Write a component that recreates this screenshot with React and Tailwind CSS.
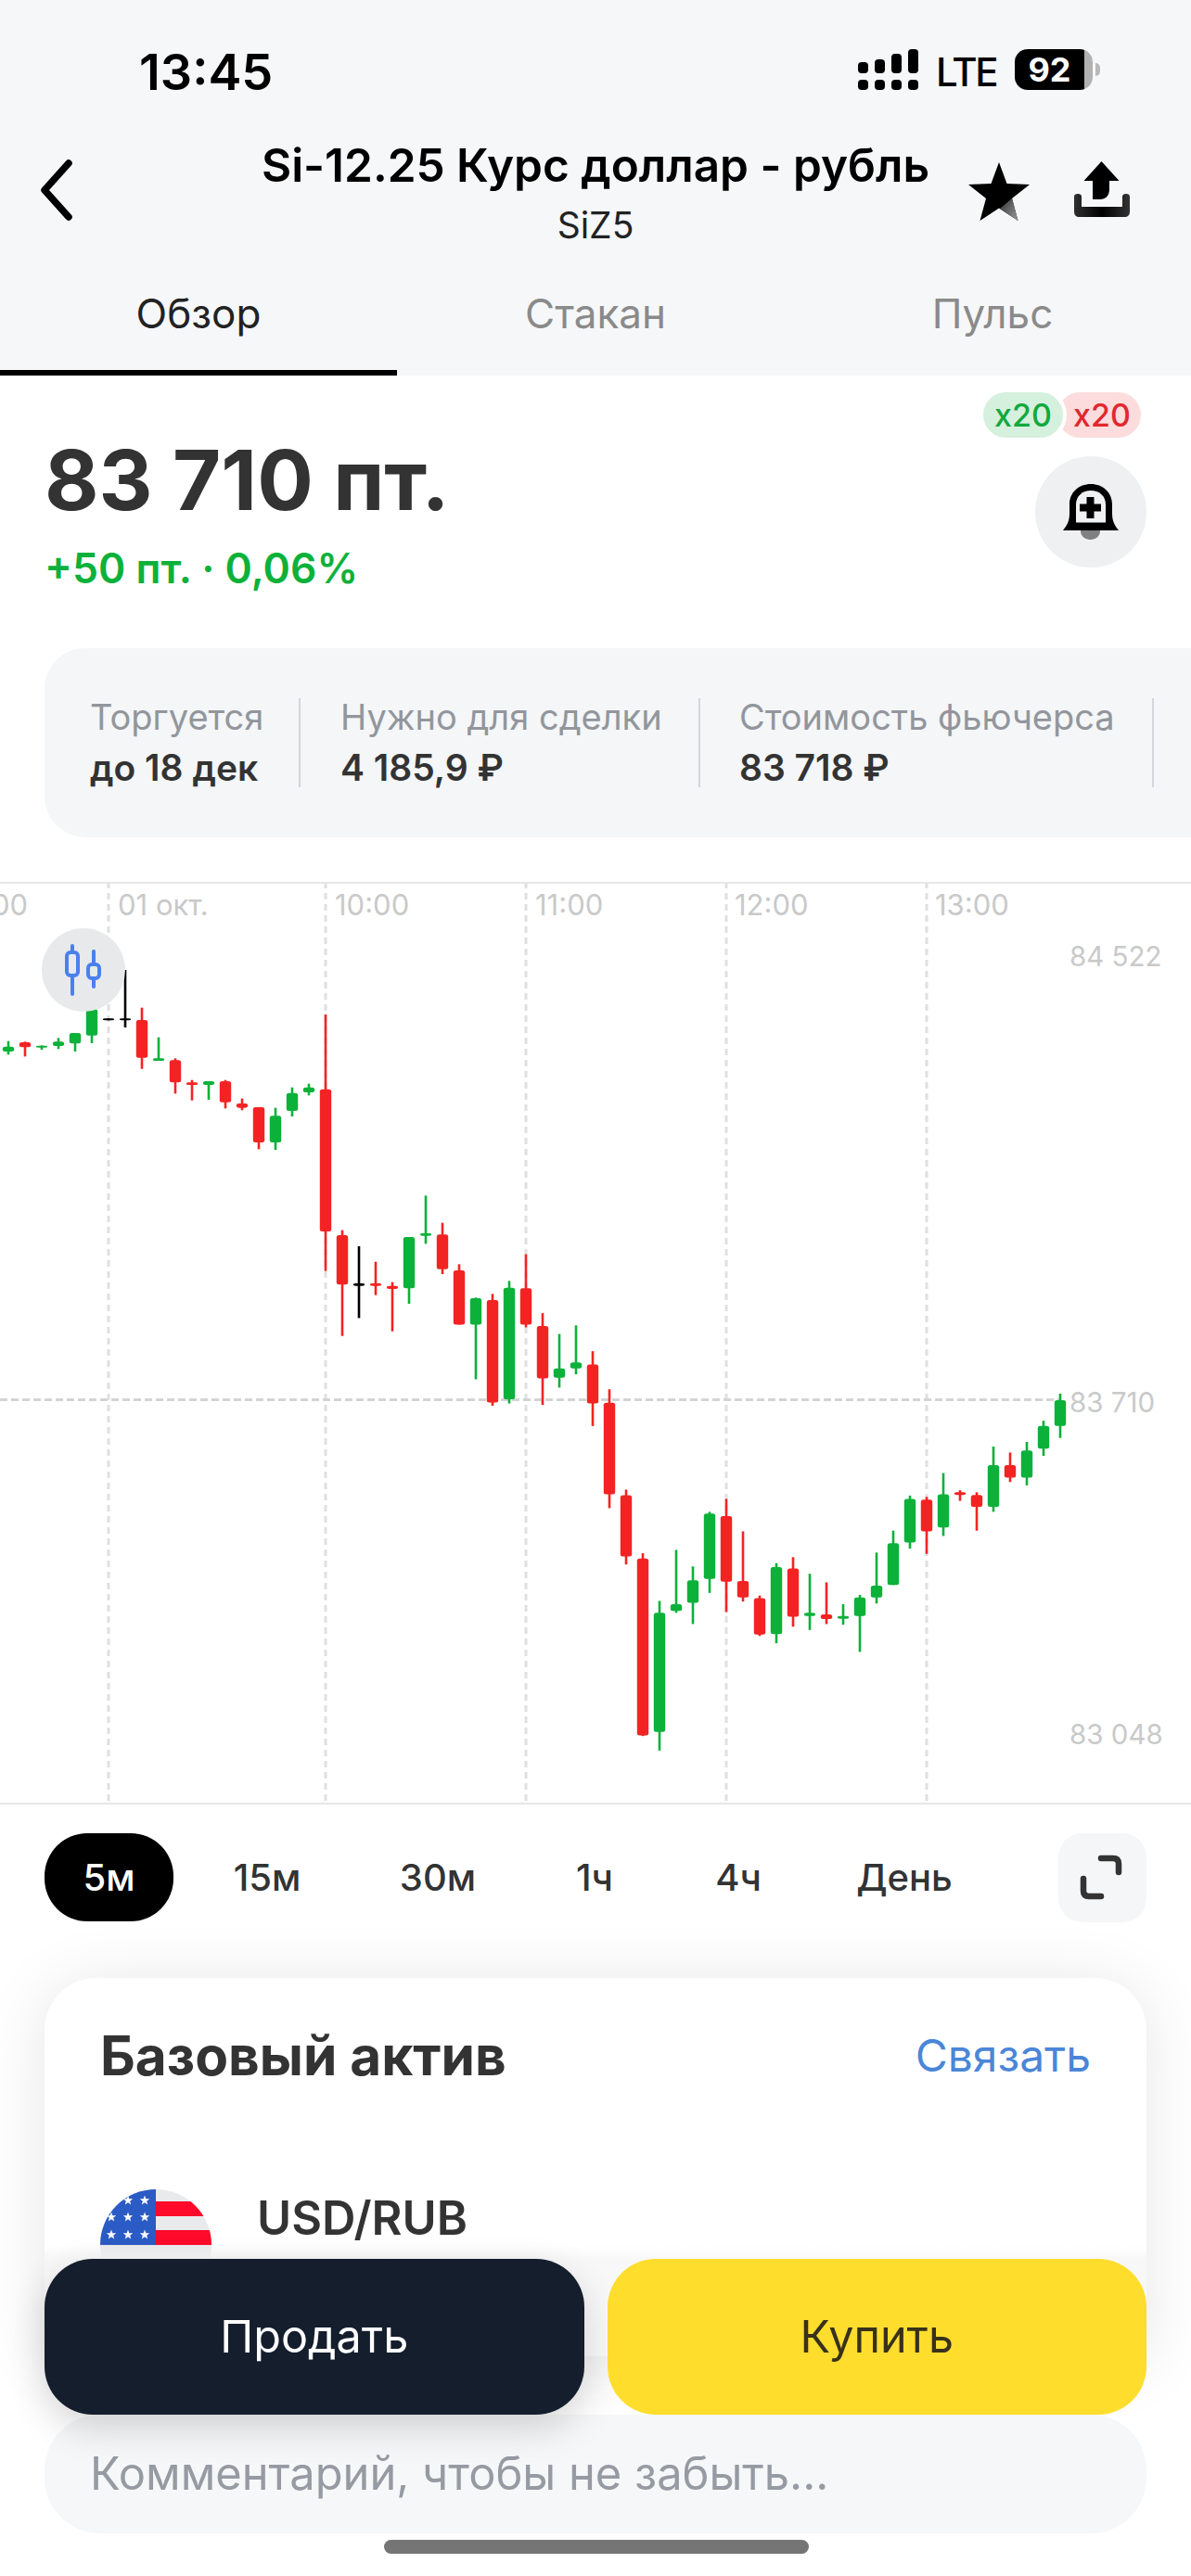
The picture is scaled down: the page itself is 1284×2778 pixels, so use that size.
const a = (y) => 940 + y / 3;
const b = (y) => 1400 + y / 2.8;

// color, wick top, body top, body bottom, wick bottom (page y)
const candles = [
  ["g", a(548), a(566), a(582), a(592)],
  ["r", a(550), a(552), a(568), a(598)],
  ["g", a(562), a(563), a(569), a(576)],
  ["g", a(538), a(550), a(564), a(574)],
  ["g", a(522), a(522), a(556), a(582)],
  ["g", a(445), a(445), a(530), a(555)],
  ["k", a(475), a(475), a(481), a(481)],
  ["k", a(318), a(475), a(481), a(504)],
  ["r", a(440), a(480), a(602), a(638)],
  ["g", a(536), a(604), a(612), a(612)],
  ["r", a(604), a(610), a(682), a(718)],
  ["r", a(674), a(682), a(690), a(740)],
  ["g", a(678), a(678), a(690), a(738)],
  ["r", a(674), a(678), a(746), a(766)],
  ["r", a(734), a(750), a(764), a(772)],
  ["r", a(762), a(762), a(876), a(898)],
  ["g", a(764), a(790), a(876), a(900)],
  ["g", a(698), a(716), a(774), a(792)],
  ["g", a(686), a(698), a(714), a(724)],
  ["r", a(462), a(704), a(1164), a(1292)],
  ["r", a(1160), a(1176), a(1336), b(114)],
  ["k", a(1212), a(1332), a(1340), b(60)],
  ["r", a(1262), a(1332), a(1340), a(1370)],
  ["r", a(1328), a(1340), a(1350), b(100)],
  ["g", a(1182), a(1182), a(1348), a(1398)],
  ["g", a(1048), a(1170), a(1178), a(1204)],
  ["r", a(1136), a(1174), a(1286), a(1302)],
  ["r", a(1270), a(1290), b(80), b(80)],
  ["g", a(1378), a(1380), b(80), b(245)],
  ["r", a(1366), a(1386), b(315), b(325)],
  ["g", a(1324), a(1346), b(305), b(318)],
  ["r", a(1238), a(1348), b(80), b(88)],
  ["r", b(45), b(84), b(242), b(322)],
  ["g", b(108), b(212), b(240), b(270)],
  ["g", b(82), b(194), b(212), b(230)],
  ["r", b(160), b(200), b(318), b(386)],
  ["r", b(275), b(316), b(592), b(634)],
  ["r", b(578), b(595), b(780), b(804)],
  ["r", b(770), b(786), b(1320), b(1322)],
  ["g", b(914), b(950), b(1310), b(1366)],
  ["g", b(760), b(924), b(944), b(950)],
  ["g", b(810), b(852), b(920), b(984)],
  ["g", b(645), b(650), b(848), b(890)],
  ["r", b(606), b(658), b(856), b(948)],
  ["r", b(704), b(854), b(904), b(916)],
  ["r", b(898), b(906), b(1016), b(1020)],
  ["g", b(800), b(812), b(1014), b(1042)],
  ["r", b(782), b(816), b(962), b(992)],
  ["g", b(832), b(950), b(960), b(1002)],
  ["r", b(858), b(955), b(969), b(984)],
  ["g", b(924), b(960), b(968), b(986)],
  ["g", b(896), b(904), b(960), b(1068)],
  ["g", b(768), b(868), b(904), b(922)],
  ["g", b(702), b(740), b(866), b(866)],
  ["g", b(596), b(606), b(738), b(756)],
  ["r", b(600), b(608), b(704), b(772)],
  ["g", b(528), b(592), b(692), b(718)],
  ["r", b(580), b(586), b(594), b(612)],
  ["r", b(586), b(594), b(630), b(702)],
  ["g", b(448), b(504), b(630), b(645)],
  ["r", b(466), b(504), b(542), b(555)],
  ["g", b(434), b(460), b(542), b(565)],
  ["g", b(370), b(386), b(454), b(476)],
  ["g", b(288), b(308), b(386), b(422)],
];

const candleColors = { g: "#0cb13a", r: "#f42323", k: "#000000" };
const gridX = [117, 351, 567, 783, 999];

const Chart = () => (
  <svg width="1284" height="995" viewBox="0 951 1284 995" className="block">
    {gridX.map((x) => (
      <line key={x} x1={x} x2={x} y1="951" y2="1942" stroke="#e0e0e0" strokeWidth="3" strokeDasharray="7 5" />
    ))}
    <line x1="0" x2="1142" y1="1509.5" y2="1509.5" stroke="#d4d4d4" strokeWidth="3" strokeDasharray="8 4" />
    {candles.map(([c, wt, bt, bb, wb], i) => {
      const x = 9 + 18 * i;
      return (
        <g key={i} fill={candleColors[c]}>
          <rect x={x - 1.3} y={wt} width="2.6" height={wb - wt} />
          <rect x={x - 6.2} y={bt} width="12.4" height={Math.max(bb - bt, 2)} rx="2.5" />
        </g>
      );
    })}
  </svg>
);

const AxisLabel = ({ className, children }) => (
  <span className={`absolute leading-[36px] text-[#c9c9c9] whitespace-nowrap ${className}`}>{children}</span>
);

const Star = () => (
  <svg width="66" height="63" viewBox="0 0 66 63">
    <defs>
      <linearGradient id="starShade" x1="0" y1="0" x2="1" y2="1">
        <stop offset="0" stopColor="#333" />
        <stop offset="1" stopColor="#999" />
      </linearGradient>
    </defs>
    <path d="M33 0 L41.5 23 L66 24 L47 39 L53.5 63 L33 49.5 L12.5 63 L19 39 L0 24 L24.5 23 Z" fill="#000" />
    <path d="M47 39 L53.5 63 L34 50 Z" fill="url(#starShade)" />
  </svg>
);

const ShareIcon = () => (
  <svg width="60" height="60" viewBox="0 0 60 60">
    <defs>
      <linearGradient id="trayShade" x1="0" y1="0" x2="1" y2="0">
        <stop offset="0" stopColor="#2f2f2f" />
        <stop offset="0.5" stopColor="#000" />
        <stop offset="1" stopColor="#333" />
      </linearGradient>
    </defs>
    <path d="M29.5 0 L48.5 21 H38 V30 C38 37 34 41 28 41 H20 V21 H10.5 Z" fill="#000" />
    <path d="M0 38 C0 36 1.5 35 4 35 C6.5 35 8 36 8 38 V49 H52 V38 C52 36 53.5 35 56 35 C58.5 35 60 36 60 38 V54 C60 58 58 60 54 60 H6 C2 60 0 58 0 54 Z" fill="url(#trayShade)" />
  </svg>
);

const BellIcon = () => (
  <svg width="60" height="60" viewBox="0 0 60 60">
    <path d="M19 50 H40 V51 C40 56 35 60 29.5 60 C24 60 19 56 19 51 Z" fill="#808080" />
    <path d="M0 50 C4 45 7 40 7 32 V22 C7 9 17 0 30 0 C43 0 53 9 53 22 V32 C53 40 56 45 60 50 Z" fill="#000" />
    <path d="M14 41.5 C14 38 14 35 14 32 V22 C14 13 21 7 30 7 C39 7 46 13 46 22 V32 C46 35 46 38 46 41.5 Z" fill="#f0f1f3" />
    <rect x="18" y="21.5" width="23" height="8" fill="#000" />
    <rect x="25.5" y="14" width="8" height="23" fill="#000" />
  </svg>
);

const FlagStar = ({ x, y }) => {
  const pts = [];
  for (let i = 0; i < 10; i++) {
    const r = i % 2 === 0 ? 5.5 : 2.3;
    const t = -Math.PI / 2 + (i * Math.PI) / 5;
    pts.push(`${x + r * Math.cos(t)},${y + r * Math.sin(t)}`);
  }
  return <polygon points={pts.join(" ")} fill="#fff" />;
};

const Flag = () => (
  <svg width="120" height="120" viewBox="0 0 120 120" className="shrink-0">
    <defs>
      <clipPath id="flagCircle">
        <circle cx="60" cy="60" r="60" />
      </clipPath>
    </defs>
    <g clipPath="url(#flagCircle)">
      <rect width="120" height="120" fill="#e9eaec" />
      <rect x="60" y="13" width="60" height="16" fill="#ff0a2a" />
      <rect x="60" y="44" width="60" height="16" fill="#ff0a2a" />
      <rect x="0" y="0" width="60" height="60" fill="#2b5bc4" />
      {[[30, 12], [48, 12], [12, 30], [30, 30], [48, 30], [12, 49], [30, 49], [48, 49]].map(([x, y]) => (
        <FlagStar key={`${x}-${y}`} x={x} y={y} />
      ))}
    </g>
  </svg>
);

const Stat = ({ label, value, className }) => (
  <div className={`flex flex-col shrink-0 justify-between h-[96px] border-r-2 border-[#d3d6da] ${className}`}>
    <span className="text-[38px] leading-[44px] text-[#92969c] whitespace-nowrap -mt-[2px]">{label}</span>
    <span className="text-[39px] leading-[44px] font-semibold text-[#333] whitespace-nowrap -mb-[1px]">{value}</span>
  </div>
);

const ranges = [
  { label: "5м", w: "w-[139px]", active: true },
  { label: "15м", w: "w-[130px] ml-[36px]" },
  { label: "30м", w: "w-[130px] ml-[54px]" },
  { label: "1ч", w: "w-[80px] ml-[64px]" },
  { label: "4ч", w: "w-[80px] ml-[75px]" },
  { label: "День", w: "w-[120px] ml-[79px]" },
];

export default function App() {
  return (
    <div className="relative w-[1284px] h-[2778px] overflow-hidden bg-white text-[#333] [font-family:Inter,'Noto_Sans',sans-serif]">
      {/* header */}
      <div className="h-[405px] bg-[#f6f7f9] flex flex-col">
        <div className="h-[125px] flex items-start justify-between pl-[150px] pr-[98px] pt-[48px] text-black">
          <span className="text-[54px] leading-[60px] font-semibold">13:45</span>
          <div className="flex items-start mt-[5px]">
            <div className="flex gap-[7px] items-start">
              <div className="flex flex-col gap-[7px] w-[11px] pt-[14px]">
                <div className="h-[12px] rounded-[4px] bg-black" />
                <div className="h-[11px] rounded-[4px] bg-black" />
              </div>
              <div className="flex flex-col gap-[7px] w-[11px] pt-[11px]">
                <div className="h-[15px] rounded-[4px] bg-black" />
                <div className="h-[11px] rounded-[4px] bg-black" />
              </div>
              <div className="flex flex-col gap-[7px] w-[11px] pt-[5px]">
                <div className="h-[21px] rounded-[4px] bg-black" />
                <div className="h-[11px] rounded-[4px] bg-black" />
              </div>
              <div className="flex flex-col gap-[7px] w-[11px]">
                <div className="h-[26px] rounded-[4px] bg-black" />
                <div className="h-[11px] rounded-[4px] bg-black" />
              </div>
            </div>
            <span className="ml-[19px] mt-[3px] text-[42px] leading-[44px] font-medium tracking-[-2.5px] w-[65px]">LTE</span>
            <div className="ml-[20px] w-[84px] h-[44px] rounded-[14px] overflow-hidden flex">
              <div className="flex-1 bg-black text-white text-[36px] leading-[44px] font-bold text-center">92</div>
              <div className="w-[9px] bg-[#b2b2b2]" />
            </div>
            <div className="ml-[3px] mt-[15px] w-[5px] h-[14px] rounded-r-[5px] bg-[#b9b9b9]" />
          </div>
        </div>
        <div className="relative h-[147px] flex flex-col items-center">
          <span className="text-[49.5px] leading-[60px] font-semibold text-black whitespace-nowrap mt-[23px]">Si-12.25 Курс доллар - рубль</span>
          <span className="text-[39px] leading-[44px] text-[#222] mt-[13px]">SiZ5</span>
          <svg width="42" height="66" viewBox="0 0 42 66" className="absolute left-[41px] top-[47px]">
            <path d="M33 4 L7 33 L33 62" fill="none" stroke="#000" strokeWidth="7.5" strokeLinecap="round" strokeLinejoin="round" />
          </svg>
          <div className="absolute left-[1044px] top-[50px]"><Star /></div>
          <div className="absolute left-[1158px] top-[49px]"><ShareIcon /></div>
        </div>
        <div className="flex-1 flex items-start pt-[41px]">
          {["Обзор", "Стакан", "Пульс"].map((t, i) => (
            <div key={t} className={`flex-1 text-center text-[44px] leading-[50px] ${i === 0 ? "text-[#222]" : "text-[#8a8a8a]"}`}>{t}</div>
          ))}
        </div>
        <div className="h-[6px] w-[428px] bg-black" />
      </div>

      {/* price */}
      <div className="h-[294px] pl-[48px] pr-[48px] flex justify-between">
        <div className="flex flex-col pt-[55px]">
          <span className="text-[90px] leading-[116px] font-bold text-[#333] whitespace-nowrap">83 710 пт.</span>
          <span className="text-[44.5px] leading-[50px] font-semibold text-[#0cb13a] whitespace-nowrap mt-[12px]">+50 пт. · 0,06%</span>
        </div>
        <div className="flex flex-col items-end pt-[18px]">
          <div className="flex mr-[6px]">
            <div className="relative z-10 h-[49px] w-[86px] rounded-full bg-[#d5f0dd] ring-[4px] ring-white text-[34px] leading-[49px] font-medium text-[#12a83e] text-center">x20</div>
            <div className="h-[49px] w-[90px] -ml-[6px] pl-[6px] rounded-full bg-[#fcdcdc] text-[34px] leading-[49px] font-medium text-[#e0282e] text-center">x20</div>
          </div>
          <div className="mt-[20px] w-[120px] h-[120px] rounded-full bg-[#eef0f2] flex items-center justify-center">
            <BellIcon />
          </div>
        </div>
      </div>

      {/* info */}
      <div className="ml-[48px] h-[204px] rounded-l-[44px] bg-[#f4f6f8] flex items-center overflow-hidden">
        <Stat label="Торгуется" value="до 18 дек" className="w-[276px] pl-[49px]" />
        <Stat label="Нужно для сделки" value="4 185,9 ₽" className="w-[431px] pl-[43px]" />
        <Stat label="Стоимость фьючерса" value="83 718 ₽" className="w-[489px] pl-[42px]" />
      </div>

      {/* chart */}
      <div className="relative mt-[48px] h-[995px] border-y-2 border-[#e6e6e6] overflow-hidden">
        <div className="absolute left-0 -top-[2px]"><Chart /></div>
        <AxisLabel className="right-[1254px] top-[5px] text-[31px]">00</AxisLabel>
        <AxisLabel className="left-[127px] top-[5px] text-[31px]">01 окт.</AxisLabel>
        <AxisLabel className="left-[361px] top-[5px] text-[31px]">10:00</AxisLabel>
        <AxisLabel className="left-[577px] top-[5px] text-[31px]">11:00</AxisLabel>
        <AxisLabel className="left-[792px] top-[5px] text-[31px]">12:00</AxisLabel>
        <AxisLabel className="left-[1008px] top-[5px] text-[31px]">13:00</AxisLabel>
        <AxisLabel className="left-[1153px] top-[60px] text-[29.5px]">84 522</AxisLabel>
        <AxisLabel className="left-[1153px] top-[541px] text-[29.5px]">83 710</AxisLabel>
        <AxisLabel className="left-[1153px] top-[899px] text-[29.5px]">83 048</AxisLabel>
        <div className="absolute left-[45px] top-[48px] w-[90px] h-[90px] rounded-full bg-[#e8e9eb] flex items-center justify-center">
          <svg width="50" height="56" viewBox="0 0 50 56">
            <g fill="none" stroke="#4a80ee" strokeWidth="4" strokeLinecap="round" strokeLinejoin="round">
              <path d="M13 2 V9 M13 34 V54" />
              <rect x="7" y="9" width="12" height="25" rx="4" />
              <path d="M36 8 V22 M36 37 V46" />
              <rect x="30" y="22" width="12" height="15" rx="4" />
            </g>
          </svg>
        </div>
      </div>

      {/* ranges */}
      <div className="h-[187px] pl-[48px] pt-[31px] relative">
        <div className="flex items-center h-[95px]">
          {ranges.map((r) => (
            <div
              key={r.label}
              className={`${r.w} h-[95px] flex items-center justify-center text-[40px] font-medium ${r.active ? "bg-black text-white rounded-[46px]" : "text-[#333]"}`}
            >
              {r.label}
            </div>
          ))}
        </div>
        <div className="absolute left-[1141px] top-[31px] w-[95px] h-[96px] rounded-[26px] bg-[#f4f6f7] flex items-center justify-center">
          <svg width="50" height="50" viewBox="0 0 50 50">
            <path d="M23 4 H36 Q42 4 42 10 V19 M4 26 V39 Q4 45 10 45 H23" fill="none" stroke="#333" strokeWidth="6.5" strokeLinecap="round" />
          </svg>
        </div>
      </div>

      {/* base asset card */}
      <div className="mx-[48px] h-[408px] rounded-t-[56px] bg-white shadow-[0_6px_70px_rgba(0,0,0,0.10)] px-[60px] pt-[50px]">
        <div className="flex items-center justify-between h-[68px]">
          <span className="text-[58.5px] leading-[68px] font-bold text-[#333]">Базовый актив</span>
          <span className="text-[48px] leading-[68px] text-[#4a86d8]">Связать</span>
        </div>
        <div className="flex gap-[49px] mt-[110px]">
          <Flag />
          <span className="text-[50.5px] leading-[60px] font-semibold text-[#333] whitespace-nowrap mt-[1px]">USD/RUB</span>
        </div>
      </div>

      {/* bottom actions */}
      <div className="absolute left-[48px] top-[2421px] w-[1188px] h-[120px] bg-linear-to-b from-white/0 to-[#f8f8f9] to-[13%]" />
      <div className="absolute left-0 top-[2436px] w-[1284px] px-[48px] flex flex-col">
        <div className="relative z-10 flex gap-[25px] h-[168px]">
          <div className="flex-1 rounded-[52px] bg-[#141e2d] text-white text-[48.5px] flex items-center justify-center shadow-[0_14px_40px_rgba(0,0,0,0.16)]">Продать</div>
          <div className="flex-1 rounded-[52px] bg-[#ffdd2d] text-[#38321a] text-[48.5px] flex items-center justify-center">Купить</div>
        </div>
        <div className="h-[128px] rounded-[60px] bg-[#f6f7f9] flex items-center pl-[49px] text-[48.8px] text-[#969aa2] whitespace-nowrap">
          Комментарий, чтобы не забыть...
        </div>
      </div>
      <div className="absolute left-[414px] top-[2739px] w-[458px] h-[15px] rounded-full bg-[#757575]" />
    </div>
  );
}
